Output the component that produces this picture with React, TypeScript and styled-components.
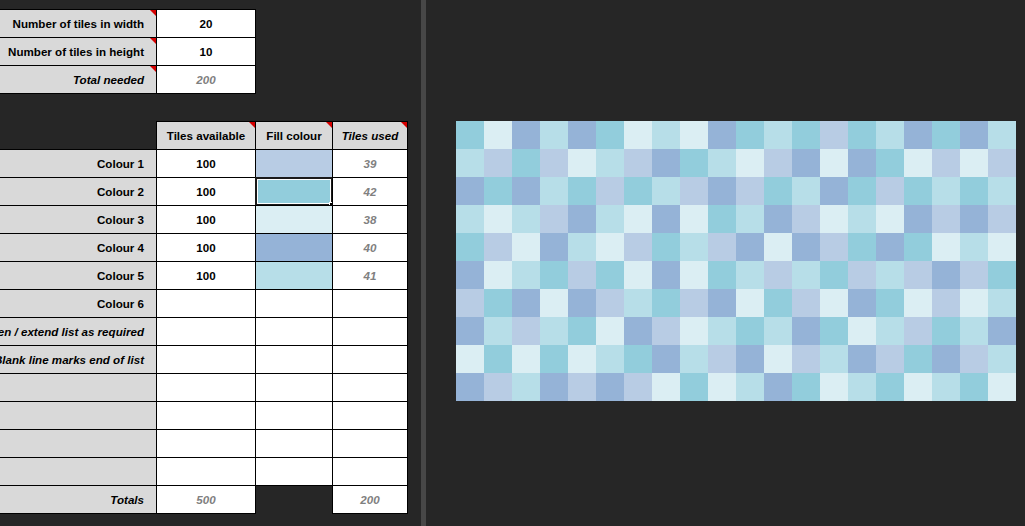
import React from 'react';
import styled, { createGlobalStyle, css } from 'styled-components';

const GlobalStyle = createGlobalStyle`
  html, body {
    margin: 0;
    padding: 0;
    background: #262626;
    overflow: hidden;
  }
  body {
    font-family: "Liberation Sans", Arial, sans-serif;
  }
`;

type ColourKey = 'A' | 'B' | 'C' | 'D' | 'E';

const palette: { key: ColourKey; name: string; fill: string; available: number }[] = [
  { key: 'A', name: 'Colour 1', fill: '#b8cce4', available: 100 },
  { key: 'B', name: 'Colour 2', fill: '#92cddc', available: 100 },
  { key: 'C', name: 'Colour 3', fill: '#dbeef3', available: 100 },
  { key: 'D', name: 'Colour 4', fill: '#95b3d7', available: 100 },
  { key: 'E', name: 'Colour 5', fill: '#b7dee8', available: 100 },
];

// Tile layout, one string per row of the floor, one letter per tile.
const layout = [
  'BCDEDBCECDBEBABEDBDE',
  'EABACEADBECADCDBCACA',
  'DBDEBABEADABEDBABEBE',
  'ECEADECDCBEDACECDADA',
  'BACDECABEADCDABDBCEC',
  'DCEBABCDCBEAEBAEADAB',
  'ABDCDAEBADCBACDBCACE',
  'DEAEBCDACEBEDBCEABED',
  'CBCBCEBDEADCAEDABDAE',
  'DAEDADACBCEDBCEBCEBC',
];

const tilesWide = layout[0].length;
const tilesHigh = layout.length;

const fillOf = (key: string) => palette.find((p) => p.key === key)?.fill ?? '#fff';

const usage = layout.join('').split('').reduce<Record<string, number>>((acc, k) => {
  acc[k] = (acc[k] ?? 0) + 1;
  return acc;
}, {});

const Workspace = styled.div`
  display: flex;
  width: 1025px;
  height: 526px;
  background: #262626;
  overflow: hidden;
`;

const Pane = styled.section`
  flex: none;
  width: 421px;
  padding-top: 9px;
  display: flex;
  flex-direction: column;
  gap: 27px;
`;

const Splitter = styled.div`
  flex: none;
  width: 5px;
  background: #474747;
`;

const Canvas = styled.section`
  flex: 1;
  padding: 121px 0 0 30px;
`;

const Sheet = styled.div<{ $cols: string; $rows: string }>`
  display: grid;
  grid-template-columns: ${(p) => p.$cols};
  grid-template-rows: ${(p) => p.$rows};
`;

type Kind = 'label' | 'head' | 'input' | 'calc' | 'swatch' | 'void';

const Cell = styled.div<{
  $kind: Kind;
  $fill?: string;
  $italic?: boolean;
  $note?: boolean;
  $lined?: boolean;
  $right?: boolean;
  $bottom?: boolean;
}>`
  position: relative;
  box-sizing: border-box;
  min-width: 0;
  display: flex;
  align-items: center;
  justify-content: center;
  white-space: nowrap;
  font-size: 11.6px;
  font-weight: 700;
  color: #000;
  background: #fff;
  border-top: 1px solid #000;
  border-left: 1px solid #000;
  ${(p) => p.$right && css`border-right: 1px solid #000;`}
  ${(p) => p.$bottom && css`border-bottom: 1px solid #000;`}
  ${(p) => p.$italic && css`font-style: italic;`}

  ${(p) =>
    p.$kind === 'label' &&
    css`
      background: #d9d9d9;
      border-left: none;
      justify-content: flex-end;
      padding-right: 12px;
    `}
  ${(p) => p.$kind === 'head' && css`background: #d9d9d9;`}
  ${(p) => p.$kind === 'calc' && css`color: #808080; font-style: italic;`}
  ${(p) => p.$kind === 'swatch' && css`background: ${p.$fill};`}
  ${(p) =>
    p.$kind === 'void' &&
    css`
      background: transparent;
      ${!p.$lined && css`border: none;`}
    `}

  ${(p) =>
    p.$note &&
    css`
      &::after {
        content: '';
        position: absolute;
        top: 0;
        right: 0;
        border-top: 6px solid #d40000;
        border-left: 6px solid transparent;
      }
    `}
`;

const Selection = styled.span`
  position: absolute;
  inset: -1px;
  border: 2px solid #1a1a1a;
  box-shadow: inset 0 0 0 1px #ffffff;
  pointer-events: none;
`;

const FillHandle = styled.span`
  position: absolute;
  right: -4px;
  bottom: -4px;
  width: 5px;
  height: 5px;
  background: #000;
  border: 1px solid #fff;
`;

const Mosaic = styled.div`
  display: grid;
  grid-template-columns: repeat(${tilesWide}, 28px);
  grid-template-rows: repeat(${tilesHigh}, 28px);
  width: max-content;
`;

const Tile = styled.div<{ $fill: string }>`
  background: ${(p) => p.$fill};
`;

const extraRows = [
  'Colour 6',
  'Shorten / extend list as required',
  'Blank line marks end of list',
  '',
  '',
  '',
  '',
];

export default function App() {
  const totalAvailable = palette.reduce((s, p) => s + p.available, 0);
  const totalUsed = palette.reduce((s, p) => s + (usage[p.key] ?? 0), 0);

  return (
    <>
      <GlobalStyle />
      <Workspace>
        <Pane>
          <Sheet $cols="156px 100px" $rows="28px 28px 29px">
            <Cell $kind="label" $note>Number of tiles in width</Cell>
            <Cell $kind="input" $right>{tilesWide}</Cell>
            <Cell $kind="label" $note>Number of tiles in height</Cell>
            <Cell $kind="input" $right>{tilesHigh}</Cell>
            <Cell $kind="label" $note $italic $bottom>Total needed</Cell>
            <Cell $kind="calc" $right $bottom>{tilesWide * tilesHigh}</Cell>
          </Sheet>

          <Sheet $cols="156px 99px 77px 76px" $rows="repeat(13, 28px) 29px">
            <Cell $kind="void" />
            <Cell $kind="head" $note>Tiles available</Cell>
            <Cell $kind="head" $note>Fill colour</Cell>
            <Cell $kind="head" $note $italic $right>Tiles used</Cell>

            {palette.map((p, i) => (
              <React.Fragment key={p.key}>
                <Cell $kind="label">{p.name}</Cell>
                <Cell $kind="input">{p.available}</Cell>
                <Cell $kind="swatch" $fill={p.fill}>
                  {i === 1 && (
                    <>
                      <Selection />
                      <FillHandle />
                    </>
                  )}
                </Cell>
                <Cell $kind="calc" $right>{usage[p.key] ?? 0}</Cell>
              </React.Fragment>
            ))}

            {extraRows.map((label, i) => (
              <React.Fragment key={`extra-${i}`}>
                <Cell $kind="label" $italic={i === 1 || i === 2}>{label}</Cell>
                <Cell $kind="input" />
                <Cell $kind="input" />
                <Cell $kind="input" $right />
              </React.Fragment>
            ))}

            <Cell $kind="label" $italic $bottom>Totals</Cell>
            <Cell $kind="calc" $bottom>{totalAvailable}</Cell>
            <Cell $kind="void" $lined />
            <Cell $kind="calc" $right $bottom>{totalUsed}</Cell>
          </Sheet>
        </Pane>

        <Splitter />

        <Canvas>
          <Mosaic>
            {layout.map((row, r) =>
              row.split('').map((k, c) => <Tile key={`${r}-${c}`} $fill={fillOf(k)} />)
            )}
          </Mosaic>
        </Canvas>
      </Workspace>
    </>
  );
}
